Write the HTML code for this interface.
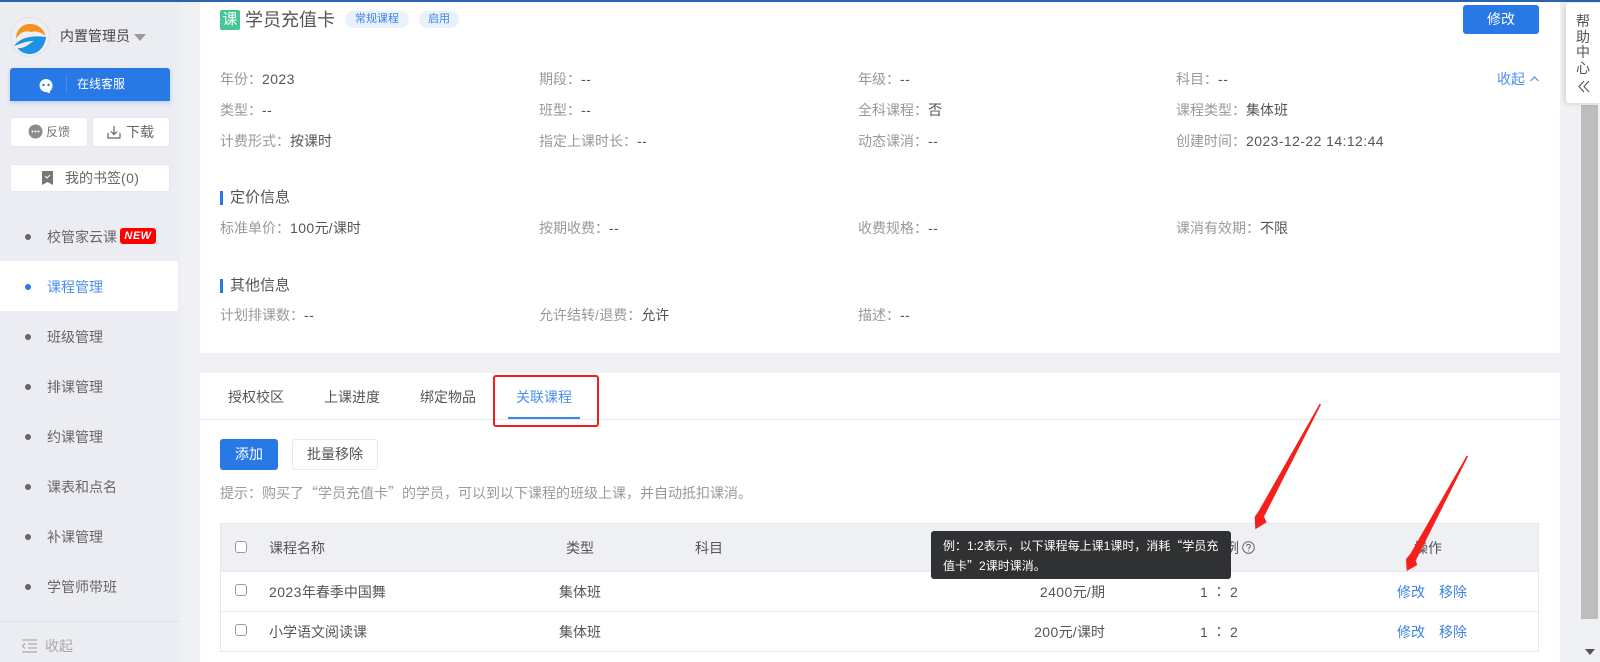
<!DOCTYPE html>
<html lang="zh"><head><meta charset="utf-8"><title>学员充值卡</title>
<style>
html,body{margin:0;padding:0;width:1600px;height:662px;overflow:hidden;background:#f0f1f5}
body{position:relative;font-family:"Liberation Sans","Noto Sans CJK SC",sans-serif;font-size:14px;color:#555}
.a{position:absolute}
.t{position:absolute;white-space:nowrap;line-height:20px;height:20px}
.l{color:#999}.b{color:#3d83e8}
i{font-style:normal;letter-spacing:.42px}
q{quotes:none;font-family:"Noto Sans CJK SC",sans-serif}
.side{color:#666}
.dot{position:absolute;left:25px;width:6px;height:6px;border-radius:50%;background:#666}
.btn{position:absolute;background:#fff;border-radius:3px;box-sizing:border-box;border:1px solid #e6e8ee;text-align:center;color:#666}
.line{position:absolute;background:#e6e8ee}
.cb{position:absolute;width:10px;height:10px;border:1px solid #999;border-radius:3px;background:#fff}
.tc{font-family:"Noto Sans CJK TC",sans-serif}
</style></head><body>
<div class="a" style="left:0;top:0;width:1600px;height:2px;background:#2a62ad"></div>

<!-- sidebar -->
<div class="a" style="left:0;top:2px;width:180px;height:660px;background:#ebedf2"></div>
<svg class="a" style="left:10px;top:17px" width="40" height="40" viewBox="0 0 40 40">
<circle cx="20" cy="20" r="19.500" fill="#eeeff2" stroke="#e0e1e5"/>
<path d="M6 22C6 12 13 7 20 7C28 7 34 12 35.500 19C30 14 25 14 21 15C15 13 9 16 6 22z" fill="#f5921e"/>
<path d="M4 29C10 21 20 18 36 20C35 30 28 37 20 37C15 37 10 35 7.500 31C15 32 18 27 24 24C16 24 10 27 4 29z" fill="#1e93e6"/>
</svg>
<div class="t" style="left:60px;top:26px;font-size:14px;color:#444">内置管理员</div>
<div class="a" style="left:134px;top:34px;border:6px solid transparent;border-top:7px solid #999;border-bottom:0"></div>
<div class="a" style="left:10px;top:68px;width:160px;height:33px;background:#2878e6;border-radius:3px 3px 0 0;box-shadow:0 2px 5px rgba(40,120,230,.25)"></div>
<svg class="a" style="left:38px;top:78px" width="16" height="16" viewBox="0 0 16 16"><path d="M8 1a6.500 6.500 0 0 0-6.500 6.500C1.500 11 4.500 14 8 14c1 0 2 .8 4 1.500-.3-1-.3-2 .3-2.700C13.800 11.500 14.500 9.500 14.500 7.500A6.500 6.500 0 0 0 8 1z" fill="#fff"/><circle cx="5.500" cy="7" r="1.200" fill="#2878e6"/><circle cx="10.500" cy="7" r="1.200" fill="#2878e6"/></svg>
<div class="a" style="left:66px;top:76px;width:1px;height:16px;background:#4a8ee9"></div>
<div class="t" style="left:77px;top:74px;font-size:12px;color:#fff">在线客服</div>

<div class="btn" style="left:10px;top:117px;width:78px;height:30px"></div>
<svg class="a" style="left:28px;top:124px" width="15" height="15" viewBox="0 0 15 15"><circle cx="7.500" cy="7.500" r="7" fill="#8c8c8c"/><circle cx="4.500" cy="7.500" r="1" fill="#fff"/><circle cx="7.500" cy="7.500" r="1" fill="#fff"/><circle cx="10.500" cy="7.500" r="1" fill="#fff"/></svg>
<div class="t" style="left:46px;top:122px;font-size:12px;color:#777">反馈</div>
<div class="btn" style="left:92px;top:117px;width:78px;height:30px"></div>
<svg class="a" style="left:107px;top:126px" width="14" height="13" viewBox="0 0 14 13" fill="none" stroke="#666" stroke-width="1.200"><path d="M7 0v8M4 5.500L7 8.500l3-3M1 7v5h12V7"/></svg>
<div class="t" style="left:126px;top:122px;color:#666">下载</div>
<div class="btn" style="left:10px;top:164px;width:160px;height:28px"></div>
<svg class="a" style="left:41px;top:171px" width="13" height="14" viewBox="0 0 13 14"><path d="M1 0h11v14l-5.500-3L1 14z" fill="#777"/><path d="M4 5l2 2 3-3" stroke="#fff" stroke-width="1" fill="none"/></svg>
<div class="t" style="left:65px;top:168px;color:#666">我的书签<i>(0)</i></div>

<div class="a" style="left:0;top:261px;width:178px;height:50px;background:#fff"></div>
<div class="dot" style="top:234px"></div><div class="t side" style="left:47px;top:227px">校管家云课</div>
<div class="a" style="left:120px;top:228px;width:36px;height:16px;background:#f00;border-radius:3px;color:#fff;font:italic bold 11px/16px 'Liberation Sans',sans-serif;text-align:center;letter-spacing:.5px">NEW</div>
<div class="dot" style="top:284px;background:#2878e6"></div><div class="t b" style="left:47px;top:277px;color:#4a8fee">课程管理</div>
<div class="dot" style="top:334px"></div><div class="t side" style="left:47px;top:327px">班级管理</div>
<div class="dot" style="top:384px"></div><div class="t side" style="left:47px;top:377px">排课管理</div>
<div class="dot" style="top:434px"></div><div class="t side" style="left:47px;top:427px">约课管理</div>
<div class="dot" style="top:484px"></div><div class="t side" style="left:47px;top:477px">课表和点名</div>
<div class="dot" style="top:534px"></div><div class="t side" style="left:47px;top:527px">补课管理</div>
<div class="dot" style="top:584px"></div><div class="t side" style="left:47px;top:577px">学管师带班</div>
<div class="a" style="left:0;top:621px;width:180px;height:1px;background:#dfe1e6"></div>
<svg class="a" style="left:22px;top:639px" width="15" height="14" viewBox="0 0 15 14" stroke="#aaa" stroke-width="1.200" fill="none"><path d="M0 1h15M6 5h9M6 9h9M0 13h15M3 4.500L.5 7 3 9.500"/></svg>
<div class="t" style="left:45px;top:636px;color:#aaa">收起</div>

<!-- top card -->
<div class="a" style="left:200px;top:2px;width:1360px;height:351px;background:#fff"></div>
<div class="a" style="left:220px;top:10px;width:20px;height:20px;background:#45c795;border-radius:2px;color:#fff;font-size:15px;line-height:20px;text-align:center">课</div>
<div class="t" style="left:245px;top:9px;font-size:18px;line-height:22px;height:22px;color:#555">学员充值卡</div>
<div class="a" style="left:345px;top:11px;width:64px;height:17px;border-radius:9px;background:#e9f1fc;color:#3d83e8;font-size:11px;line-height:17px;text-align:center">常规课程</div>
<div class="a" style="left:419px;top:11px;width:40px;height:17px;border-radius:9px;background:#e9f1fc;color:#3d83e8;font-size:11px;line-height:17px;text-align:center">启用</div>
<div class="a" style="left:1463px;top:5px;width:76px;height:29px;border-radius:3px;background:#2878e6;color:#fff;text-align:center;line-height:29px">修改</div>

<div class="t" style="left:220px;top:69px"><span class="l">年份：</span><i>2023</i></div>
<div class="t" style="left:539px;top:69px"><span class="l">期段：</span><i>--</i></div>
<div class="t" style="left:858px;top:69px"><span class="l">年级：</span><i>--</i></div>
<div class="t" style="left:1176px;top:69px"><span class="l">科目：</span><i>--</i></div>
<div class="t b" style="left:1497px;top:69px;color:#4a8fee">收起</div>
<svg class="a" style="left:1530px;top:76px" width="9" height="6" viewBox="0 0 9 6" fill="none" stroke="#4a8fee" stroke-width="1.200"><path d="M.5 5L4.500 1l4 4"/></svg>

<div class="t" style="left:220px;top:100px"><span class="l">类型：</span><i>--</i></div>
<div class="t" style="left:539px;top:100px"><span class="l">班型：</span><i>--</i></div>
<div class="t" style="left:858px;top:100px"><span class="l">全科课程：</span>否</div>
<div class="t" style="left:1176px;top:100px"><span class="l">课程类型：</span>集体班</div>

<div class="t" style="left:220px;top:131px"><span class="l">计费形式：</span>按课时</div>
<div class="t" style="left:539px;top:131px"><span class="l">指定上课时长：</span><i>--</i></div>
<div class="t" style="left:858px;top:131px"><span class="l">动态课消：</span><i>--</i></div>
<div class="t" style="left:1176px;top:131px"><span class="l">创建时间：</span><i>2023-12-22 14:12:44</i></div>

<div class="a" style="left:220px;top:191px;width:3px;height:14px;background:#2878e6"></div>
<div class="t" style="left:230px;top:188px;font-size:15px;color:#555">定价信息</div>
<div class="t" style="left:220px;top:218px"><span class="l">标准单价：</span><i>100</i>元<i>/</i>课时</div>
<div class="t" style="left:539px;top:218px"><span class="l">按期收费：</span><i>--</i></div>
<div class="t" style="left:858px;top:218px"><span class="l">收费规格：</span><i>--</i></div>
<div class="t" style="left:1176px;top:218px"><span class="l">课消有效期：</span>不限</div>

<div class="a" style="left:220px;top:279px;width:3px;height:14px;background:#2878e6"></div>
<div class="t" style="left:230px;top:276px;font-size:15px;color:#555">其他信息</div>
<div class="t" style="left:220px;top:305px"><span class="l">计划排课数：</span><i>--</i></div>
<div class="t" style="left:539px;top:305px"><span class="l">允许结转<i>/</i>退费：</span>允许</div>
<div class="t" style="left:858px;top:305px"><span class="l">描述：</span><i>--</i></div>

<!-- bottom card -->
<div class="a" style="left:200px;top:373px;width:1360px;height:289px;background:#fff"></div>
<div class="line" style="left:200px;top:419px;width:1360px;height:1px"></div>
<div class="t" style="left:228px;top:387px">授权校区</div>
<div class="t" style="left:324px;top:387px">上课进度</div>
<div class="t" style="left:420px;top:387px">绑定物品</div>
<div class="t" style="left:516px;top:387px;color:#4a8fee">关联课程</div>
<div class="a" style="left:508px;top:417px;width:72px;height:2px;background:#3d83e8"></div>
<div class="a" style="left:493px;top:375px;width:106px;height:52px;box-sizing:border-box;border:2px solid #f0201c;border-radius:3px"></div>

<div class="a" style="left:220px;top:439px;width:58px;height:31px;border-radius:3px;background:#2878e6;color:#fff;text-align:center;line-height:31px">添加</div>
<div class="btn" style="left:292px;top:439px;width:86px;height:31px;line-height:29px;color:#555">批量移除</div>
<div class="t l" style="left:220px;top:483px">提示：购买了<span style="font-family:'Noto Sans CJK SC',sans-serif">“</span>学员充值卡<span style="font-family:'Noto Sans CJK SC',sans-serif">”</span>的学员，可以到以下课程的班级上课，并自动抵扣课消。</div>

<!-- table -->
<div class="a" style="left:220px;top:523px;width:1319px;height:48px;background:#eff0f4;border:1px solid #e6e8ee;border-bottom:0;box-sizing:border-box"></div>
<div class="line" style="left:220px;top:571px;width:1319px;height:1px"></div>
<div class="line" style="left:220px;top:611px;width:1319px;height:1px"></div>
<div class="line" style="left:220px;top:651px;width:1319px;height:1px"></div>
<div class="line" style="left:220px;top:571px;width:1px;height:80px"></div>
<div class="line" style="left:1538px;top:571px;width:1px;height:80px"></div>
<div class="cb" style="left:235px;top:541px"></div>
<div class="cb" style="left:235px;top:584px"></div>
<div class="cb" style="left:235px;top:624px"></div>
<div class="t" style="left:269px;top:538px">课程名称</div>
<div class="t" style="left:566px;top:538px">类型</div>
<div class="t" style="left:695px;top:538px">科目</div>
<div class="t" style="left:269px;top:582px"><i>2023</i>年春季中国舞</div>
<div class="t" style="left:559px;top:582px">集体班</div>
<div class="t" style="left:269px;top:622px">小学语文阅读课</div>
<div class="t" style="left:559px;top:622px">集体班</div>
<div class="t" style="right:495px;top:582px"><i>2400</i>元<i>/</i>期</div>
<div class="t" style="right:495px;top:622px"><i>200</i>元<i>/</i>课时</div>
<div class="t" style="left:1200px;top:582px">1</div><div class="t tc" style="left:1212px;top:582px">：</div><div class="t" style="left:1230px;top:582px">2</div>
<div class="t" style="left:1200px;top:622px">1</div><div class="t tc" style="left:1212px;top:622px">：</div><div class="t" style="left:1230px;top:622px">2</div>
<div class="t" style="left:1225px;top:538px">例</div>
<svg class="a" style="left:1242px;top:541px" width="13" height="13" viewBox="0 0 13 13" fill="none" stroke="#666"><circle cx="6.500" cy="6.500" r="5.800"/><path d="M4.700 5.200a1.800 1.800 0 1 1 2.700 1.500c-.6.400-.9.700-.9 1.300M6.500 9.200v1"/></svg>
<div class="t" style="left:1414px;top:538px">操作</div>
<div class="t b" style="left:1397px;top:582px">修改</div><div class="t b" style="left:1439px;top:582px">移除</div>
<div class="t b" style="left:1397px;top:622px">修改</div><div class="t b" style="left:1439px;top:622px">移除</div>

<!-- tooltip -->
<div class="a" style="left:931px;top:531px;width:300px;height:48px;background:#303133;border-radius:3px;color:#fff;font-size:12px;line-height:19px;box-sizing:border-box;padding:5px 12px">例：1:2表示，以下课程每上课1课时，消耗<span style="font-family:'Noto Sans CJK SC',sans-serif">“</span>学员充值卡<span style="font-family:'Noto Sans CJK SC',sans-serif">”</span>2课时课消。</div>

<!-- red arrows -->
<svg class="a" style="left:0;top:0" width="1600" height="662" viewBox="0 0 1600 662">
<path d="M1321 404.500L1264 516.700 1266.700 522.300 1255.300 529.300 1254.700 516.700 1258.300 511.700 1319.800 403.500z" fill="#f5201c"/>
<path d="M1468 456.500L1415.700 560.700 1417.300 565 1406.700 571 1406 559.300 1410.700 553.300 1466.800 455.500z" fill="#f5201c"/>
</svg>

<!-- scrollbar & help -->
<div class="a" style="left:1581px;top:105px;width:17px;height:514px;background:#bdbdbd"></div>
<div class="a" style="left:1585px;top:649px;border:5px solid transparent;border-top:6px solid #555;border-bottom:0"></div>
<div class="a" style="left:1566px;top:3px;width:34px;height:100px;background:#fff;border-radius:3px 0 0 3px;box-shadow:-2px 1px 5px rgba(0,0,0,.12)"></div>
<div class="a" style="left:1576px;top:14px;width:14px;font-size:14px;line-height:15.500px;color:#555;text-align:center">帮助中心</div>
<svg class="a" style="left:1578px;top:80px" width="12" height="13" viewBox="0 0 12 13" fill="none" stroke="#555" stroke-width="1.100"><path d="M6 1L1 6.500 6 12M11 1L6 6.500 11 12"/></svg>
</body></html>
